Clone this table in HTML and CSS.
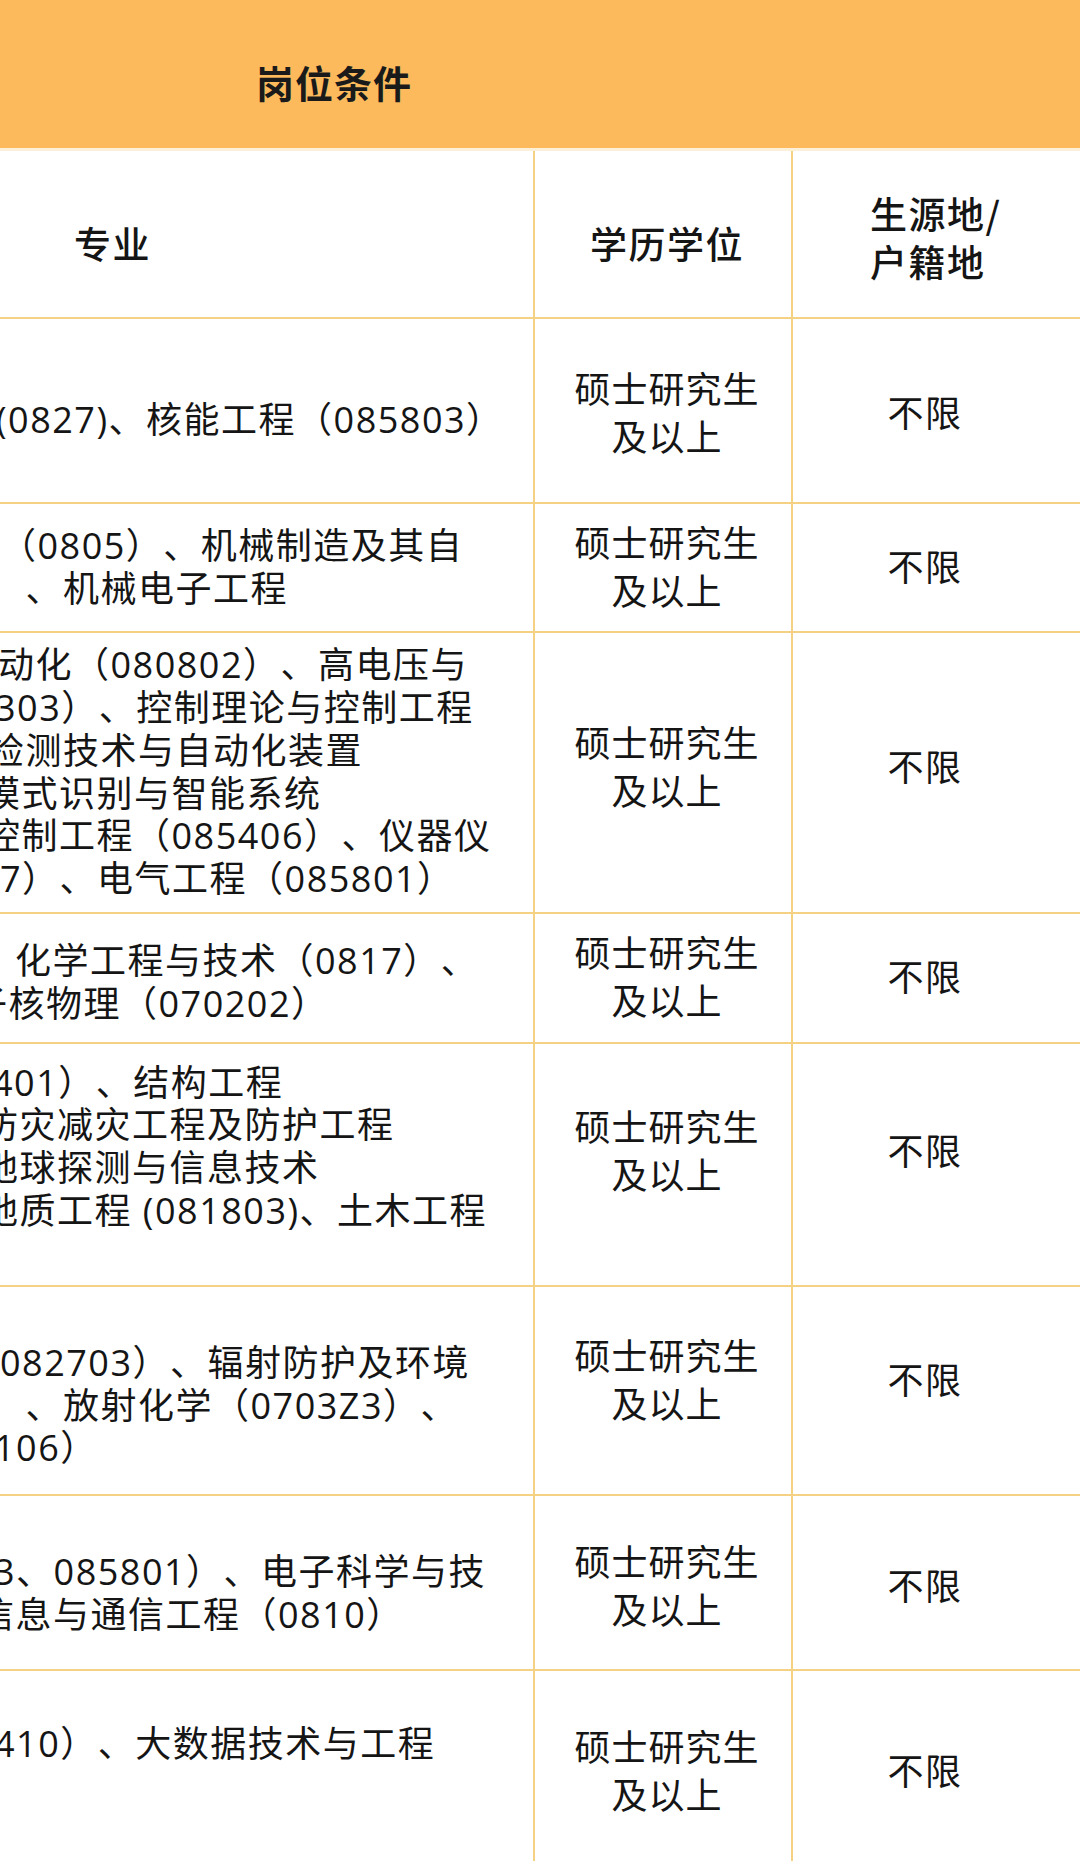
FILE: index.html
```html
<!DOCTYPE html>
<html lang="zh-CN">
<head>
<meta charset="utf-8">
<title>岗位条件</title>
<link rel="stylesheet" href="styles.css">
</head>
<body>
<div class="sheet">
  <div class="band"><span class="title">岗位条件</span></div>

  <div class="row rh">
    <div class="cell c1 hc1">专业</div>
    <div class="cell c2 hc2">学历学位</div>
    <div class="cell c3 hc3"><span class="hl">生源地/</span><span class="hl">户籍地</span></div>
  </div>

  <div class="row r1">
    <div class="cell c1 p20">
      <span class="ln xm4">(0827)、核能工程（085803）</span>
    </div>
    <div class="cell c2"><span>硕士研究生</span><span>及以上</span></div>
    <div class="cell c3">不限</div>
  </div>

  <div class="row r2">
    <div class="cell c1">
      <span class="ln x0">（0805）、机械制造及其自</span>
      <span class="ln xm12">）、机械电子工程</span>
    </div>
    <div class="cell c2"><span>硕士研究生</span><span>及以上</span></div>
    <div class="cell c3">不限</div>
  </div>

  <div class="row r3">
    <div class="cell c1">
      <span class="ln xm2">动化（080802）、高电压与</span>
      <span class="ln xm5">303）、控制理论与控制工程</span>
      <span class="ln xm12">检测技术与自动化装置</span>
      <span class="ln xm16">模式识别与智能系统</span>
      <span class="ln xm16">控制工程（085406）、仪器仪</span>
      <span class="ln x0">7）、电气工程（085801）</span>
    </div>
    <div class="cell c2"><span>硕士研究生</span><span>及以上</span></div>
    <div class="cell c3">不限</div>
  </div>

  <div class="row r4">
    <div class="cell c1 p10">
      <span class="ln x15">化学工程与技术（0817）、</span>
      <span class="ln xm29">子核物理（070202）</span>
    </div>
    <div class="cell c2"><span>硕士研究生</span><span>及以上</span></div>
    <div class="cell c3">不限</div>
  </div>

  <div class="row r5">
    <div class="cell c1 p8">
      <span class="ln xm8">401）、结构工程</span>
      <span class="ln xm18">防灾减灾工程及防护工程</span>
      <span class="ln xm18">地球探测与信息技术</span>
      <span class="ln xm18">地质工程 (081803)、土木工程</span>
      <span class="ln"></span>
    </div>
    <div class="cell c2"><span>硕士研究生</span><span>及以上</span></div>
    <div class="cell c3">不限</div>
  </div>

  <div class="row r6">
    <div class="cell c1 pb12">
      <span class="ln"></span>
      <span class="ln x0">082703）、辐射防护及环境</span>
      <span class="ln xm12">）、放射化学（0703Z3）、</span>
      <span class="ln xm6">106）</span>
    </div>
    <div class="cell c2"><span>硕士研究生</span><span>及以上</span></div>
    <div class="cell c3">不限</div>
  </div>

  <div class="row r7">
    <div class="cell c1 p22">
      <span class="ln xm6">3、085801）、电子科学与技</span>
      <span class="ln xm22">信息与通信工程（0810）</span>
    </div>
    <div class="cell c2"><span>硕士研究生</span><span>及以上</span></div>
    <div class="cell c3">不限</div>
  </div>

  <div class="row r8">
    <div class="cell c1 pb12">
      <span class="ln xm6">410）、大数据技术与工程</span>
      <span class="ln"></span>
    </div>
    <div class="cell c2"><span>硕士研究生</span><span>及以上</span></div>
    <div class="cell c3">不限</div>
  </div>
</div>
</body>
</html>
```

FILE: styles.css
```css
html, body {
  margin: 0;
  padding: 0;
  background: #ffffff;
}

body {
  width: 1080px;
  height: 1861px;
  overflow: hidden;
  font-family: "Open Sans", "Noto Sans CJK SC", sans-serif;
  color: #151515;
  text-spacing-trim: space-all;
}

.sheet {
  width: 1080px;
}

.band {
  height: 148px;
  background: #fcba5d;
  display: flex;
  align-items: center;
  padding: 15px 0 0 256px;
  box-sizing: border-box;
}

.title {
  font-family: "Noto Sans CJK SC", sans-serif;
  font-size: 38px;
  font-weight: 700;
  line-height: 38px;
  letter-spacing: 1px;
  color: #1a1a1a;
}

.row {
  display: grid;
  grid-template-columns: 535px 258px 287px;
  border-bottom: 2px solid #f5d283;
  box-sizing: border-box;
}

.rh { height: 171px; border-top: 3px solid #fdf0d8; }
.r1 { height: 185px; }
.r2 { height: 129px; }
.r3 { height: 281px; }
.r4 { height: 130px; }
.r5 { height: 243px; }
.r6 { height: 209px; }
.r7 { height: 175px; }
.r8 { height: 204px; }

.cell {
  display: flex;
  flex-direction: column;
  justify-content: center;
  box-sizing: border-box;
  min-width: 0;
}

.c1, .c2 {
  border-right: 2px solid #f5d283;
}

.c1 {
  align-items: flex-start;
  font-size: 36px;
  letter-spacing: 1.5px;
}

.c2 {
  align-items: center;
  text-align: center;
  font-size: 36px;
  line-height: 48px;
  letter-spacing: 1px;
  padding-left: 8px;
}

.c3 {
  align-items: center;
  font-size: 36px;
  line-height: 48px;
  letter-spacing: 1.5px;
  padding-right: 23px;
}

/* vertical nudges of the degree / origin columns per row */
.r1 .c2, .r1 .c3 { padding-top: 6px; }
.r3 .c2, .r3 .c3 { padding-bottom: 10px; }
.r5 .c2, .r5 .c3 { padding-bottom: 26px; }
.r6 .c2, .r6 .c3 { padding-bottom: 20px; }
.r7 .c2, .r7 .c3 { padding-top: 8px; }

/* header row */
.hc1, .hc2, .hc3 {
  font-family: "Noto Sans CJK SC", sans-serif;
  font-size: 37px;
  font-weight: 500;
  letter-spacing: 1.5px;
  line-height: 48px;
}

.hc1 {
  padding: 18px 0 0 74px;
}

.hc2 {
  padding-top: 18px;
}

.hc3 {
  align-items: flex-start;
  padding: 6px 0 0 77px;
}

.hl {
  display: block;
  white-space: nowrap;
}

/* lines of the major column (text runs past the left edge of the picture) */
.ln {
  display: block;
  white-space: nowrap;
  height: 42.7px;
  line-height: 42.7px;
}

.p8 { padding-top: 8px; }
.p10 { padding-top: 10px; }
.p20 { padding-top: 20px; }
.p22 { padding-top: 22px; }
.pb12 { padding-bottom: 12px; }

.x15 { margin-left: 15px; }
.x0 { margin-left: 0; }
.xm2 { margin-left: -2px; }
.xm4 { margin-left: -4px; }
.xm5 { margin-left: -5px; }
.xm6 { margin-left: -6px; }
.xm8 { margin-left: -8px; }
.xm12 { margin-left: -12px; }
.xm16 { margin-left: -16px; }
.xm18 { margin-left: -18px; }
.xm22 { margin-left: -22px; }
.xm29 { margin-left: -29px; }
```
